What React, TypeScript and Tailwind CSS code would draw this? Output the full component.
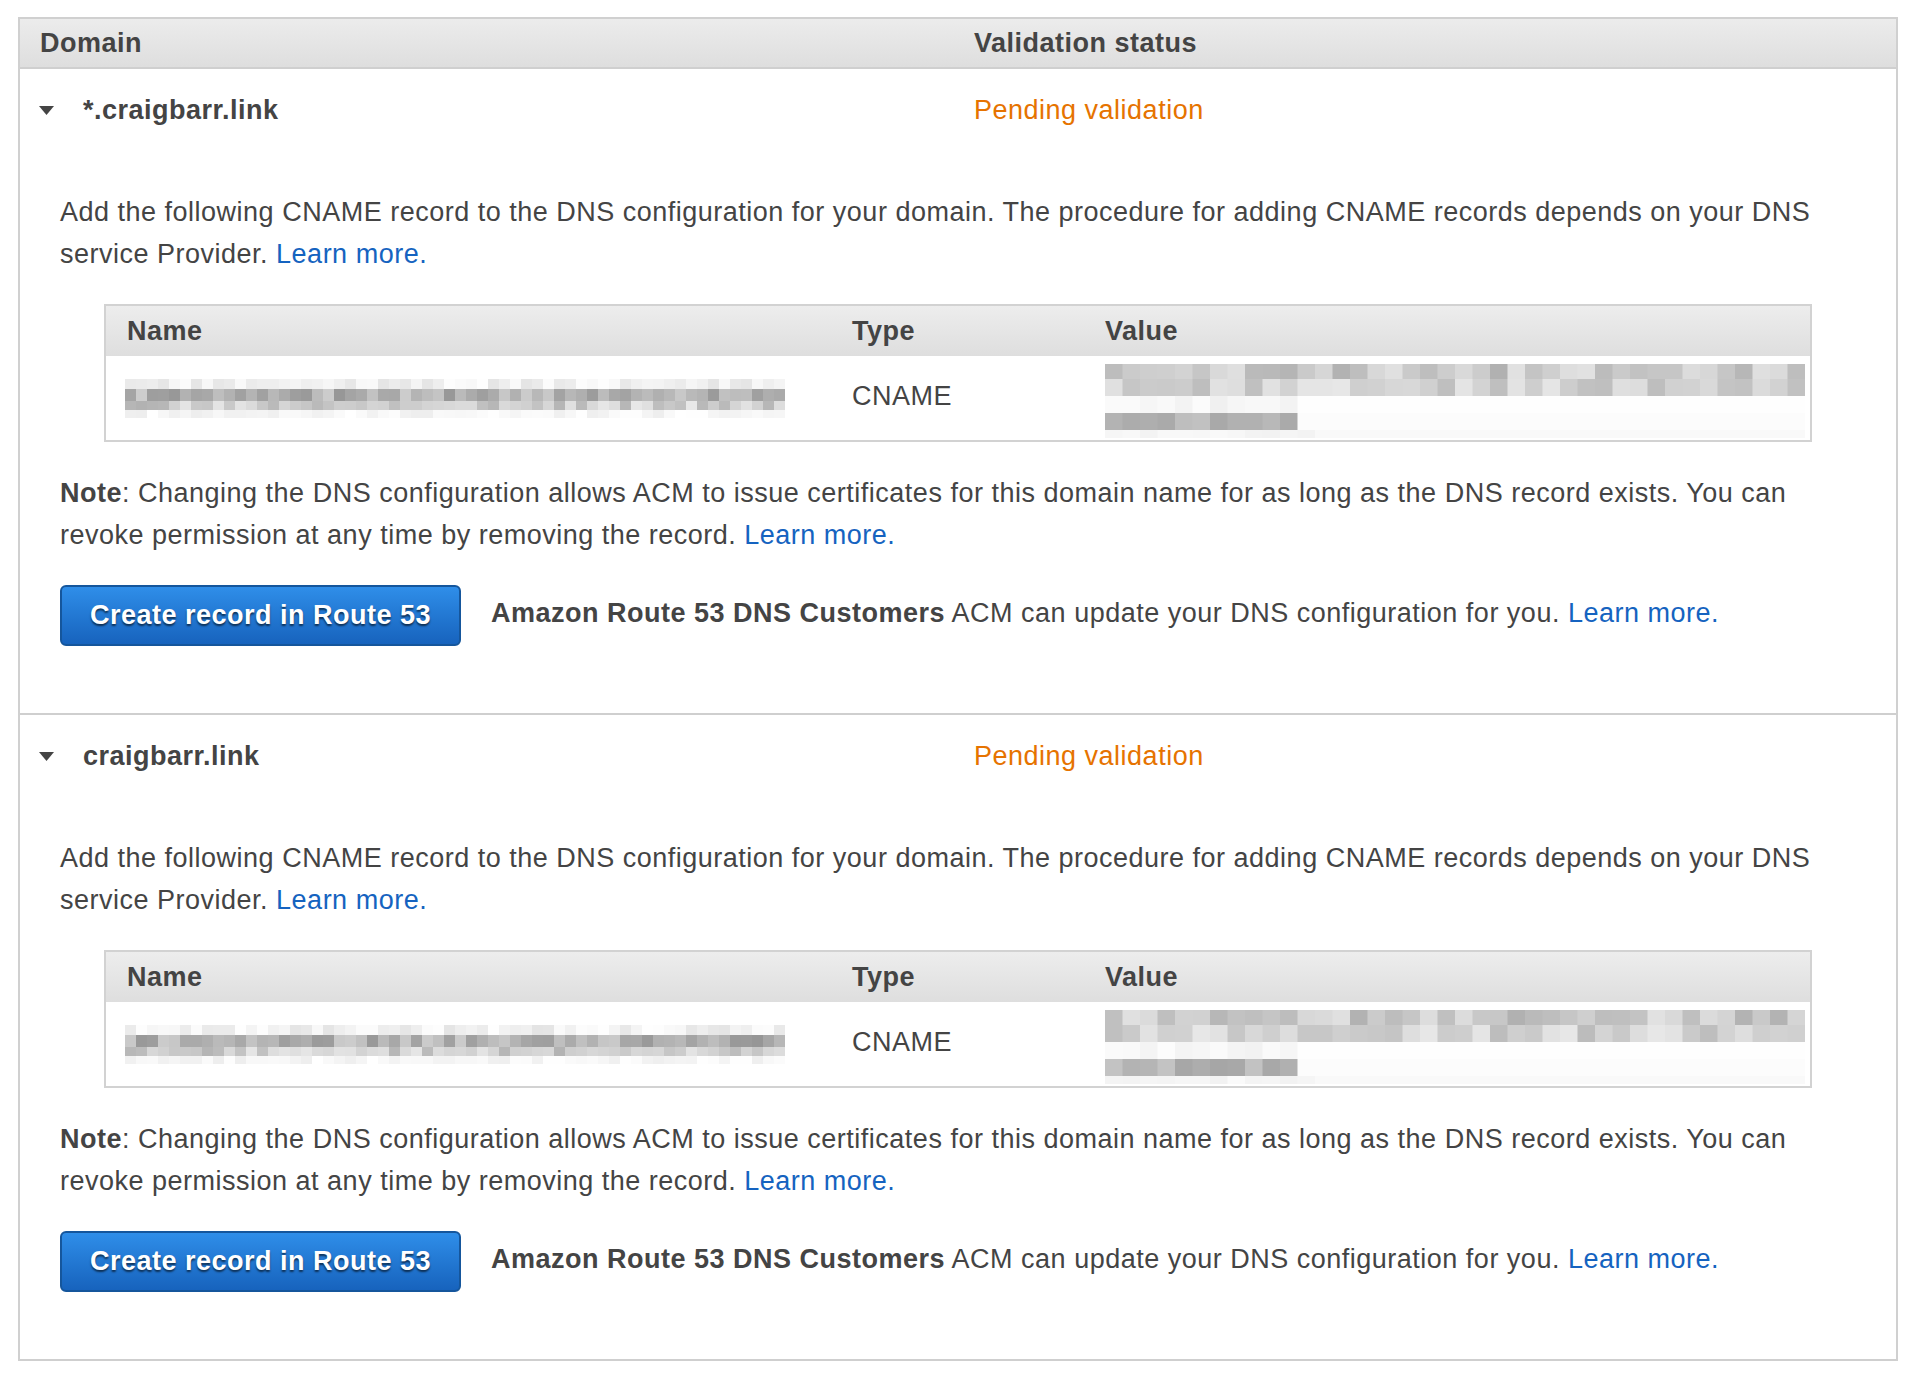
import React from 'react'

type Band = { h: number; lo: number; hi: number; until?: number; rest?: number }

function makeRand(seed: number) {
  let s = seed
  return () => {
    s = (s * 1664525 + 1013904223) % 4294967296
    return s / 4294967296
  }
}

// pixelated (redacted) strip drawn as a grid of gray cells
function Redacted({ seed, cell, cols, bands }: { seed: number; cell: number; cols: number; bands: Band[] }) {
  const rand = makeRand(seed)
  const rects: React.ReactNode[] = []
  let y = 0
  bands.forEach((b, bi) => {
    for (let c = 0; c < cols; c++) {
      const inside = b.until === undefined || c < b.until
      const v = inside ? Math.round(b.lo + rand() * (b.hi - b.lo)) : b.rest ?? 255
      rects.push(
        <rect key={`${bi}-${c}`} x={c * cell} y={y} width={cell + 0.5} height={b.h} fill={`rgb(${v},${v},${v})`} />
      )
    }
    y += b.h
  })
  return (
    <svg width={cols * cell} height={y} viewBox={`0 0 ${cols * cell} ${y}`} className="block shrink-0">
      {rects}
    </svg>
  )
}

const nameBands: Band[] = [
  { h: 10, lo: 228, hi: 255 },
  { h: 12, lo: 150, hi: 205 },
  { h: 9, lo: 178, hi: 232 },
  { h: 8, lo: 238, hi: 255 },
]

const valueBands: Band[] = [
  { h: 15, lo: 176, hi: 226 },
  { h: 17, lo: 186, hi: 232 },
  { h: 17, lo: 240, hi: 252, until: 11, rest: 254 },
  { h: 17, lo: 166, hi: 196, until: 11, rest: 252 },
  { h: 8, lo: 242, hi: 250, until: 12, rest: 249 },
]

function LearnMore() {
  return <a className="text-[#1563c0] cursor-pointer">Learn more.</a>
}

function DomainRow({ domain, seed }: { domain: string; seed: number }) {
  return (
    <div className="border-b-2 border-[#cfcfcf] pb-[67px]">
      <div className="flex items-center pt-[25px] h-[57px]">
        <div className="w-[954px] pl-[19px] flex items-center">
          <svg width="15" height="9" viewBox="0 0 15 9" className="shrink-0">
            <path d="M0 0 L15 0 L7.5 9 Z" fill="#444" />
          </svg>
          <span className="ml-[29px] font-bold text-[27px] leading-[32px]">{domain}</span>
        </div>
        <span className="text-[27px] leading-[32px] text-[#e67300]">Pending validation</span>
      </div>

      <div className="px-[40px]">
        <p className="mt-[65px] text-[27px] leading-[42px]">
          Add the following CNAME record to the DNS configuration for your domain. The procedure for adding CNAME
          records depends on your DNS service Provider. <LearnMore />
        </p>

        <div className="mt-[29px] mx-[44px] border-2 border-[#d2d2d2]">
          <div className="flex h-[50px] items-center bg-linear-to-b from-[#ededed] to-[#dedede] font-bold text-[27px]">
            <div className="w-[723px] pl-[21px]">Name</div>
            <div className="w-[253px] pl-[23px]">Type</div>
            <div className="pl-[23px]">Value</div>
          </div>
          <div className="flex h-[84px] items-center bg-white text-[27px]">
            <div className="w-[723px] pl-[19px]">
              <Redacted seed={seed} cell={11} cols={60} bands={nameBands} />
            </div>
            <div className="w-[253px] pl-[23px] -mt-[4px]">CNAME</div>
            <div className="pl-[23px] mt-[6px]">
              <Redacted seed={seed * 7 + 3} cell={17.5} cols={40} bands={valueBands} />
            </div>
          </div>
        </div>

        <p className="mt-[30px] text-[27px] leading-[42px]">
          <b>Note</b>: Changing the DNS configuration allows ACM to issue certificates for this domain name for as long
          as the DNS record exists. You can revoke permission at any time by removing the record. <LearnMore />
        </p>

        <div className="mt-[29px] flex items-center">
          <button className="w-[401px] h-[61px] shrink-0 rounded-[6px] border-2 border-[#15569c] bg-linear-to-b from-[#2f8ee9] to-[#1763bd] text-white font-bold text-[27px] [text-shadow:0_2px_2px_rgba(0,0,0,0.6)]">
            Create record in Route 53
          </button>
          <p className="ml-[30px] -mt-[5px] text-[27px]">
            <b>Amazon Route 53 DNS Customers</b> ACM can update your DNS configuration for you. <LearnMore />
          </p>
        </div>
      </div>
    </div>
  )
}

export default function App() {
  return (
    <div className="min-h-screen bg-white pt-[17px] pl-[18px] font-['Liberation_Sans',Arial,sans-serif] tracking-[0.5px] text-[#444]">
      <div className="w-[1880px] border-x-2 border-t-2 border-[#d0d0d0]">
        <div className="flex h-[50px] items-center border-b-2 border-[#cfcfcf] bg-linear-to-b from-[#ececec] to-[#dedede] font-bold text-[27px]">
          <div className="w-[954px] pl-[20px]">Domain</div>
          <div>Validation status</div>
        </div>
        <DomainRow domain="*.craigbarr.link" seed={11} />
        <DomainRow domain="craigbarr.link" seed={29} />
      </div>
    </div>
  )
}
